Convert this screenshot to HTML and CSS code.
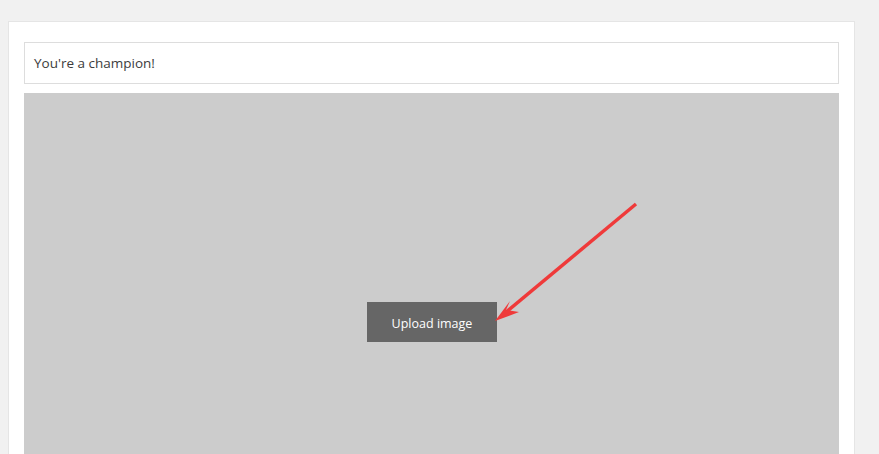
FILE: index.html
```html
<!DOCTYPE html>
<html>
<head>
<meta charset="utf-8">
<link rel="stylesheet" href="styles.css">
</head>
<body>
<div class="page">
  <div class="card">
    <div class="field">You're a champion!</div>
    <div class="drop">
      <button class="upload">Upload image</button>
      <svg class="arrow" width="815" height="458" viewBox="0 0 815 458">
        <line x1="612" y1="111" x2="481" y2="220" stroke="#ef3a3a" stroke-width="3.5" stroke-linecap="butt"/>
        <polygon points="471,228 486,208 482,217 495,219" fill="#ef3a3a"/>
      </svg>
    </div>
  </div>
</div>
</body>
</html>
```
FILE: styles.css
```css
html, body {
  margin: 0;
  padding: 0;
  background: #f1f1f1;
  overflow: hidden;
}
.page {
  padding: 21px 24px 0 8px;
  height: 454px;
  box-sizing: border-box;
  overflow: hidden;
}
.card {
  background: #fff;
  border: 1px solid #e5e5e5;
  padding: 20px 15px 0 15px;
  height: 600px;
}
.field {
  height: 40px;
  border: 1px solid #dddddd;
  box-sizing: content-box;
  padding: 0 9px;
  display: flex;
  align-items: center;
  font-family: "Open Sans", sans-serif;
  font-size: 13.5px;
  color: #3c3c3c;
  margin-bottom: 9px;
}
.drop {
  position: relative;
  height: 458px;
  background: #cccccc;
  display: flex;
  align-items: center;
  justify-content: center;
}
.upload {
  width: 130px;
  height: 40px;
  border: none;
  background: #666666;
  color: #fff;
  font-family: "Open Sans", sans-serif;
  font-size: 12.5px;
  padding: 2px 0 0 0;
  margin-left: 1px;
}
.arrow {
  position: absolute;
  left: 0;
  top: 0;
}
```
